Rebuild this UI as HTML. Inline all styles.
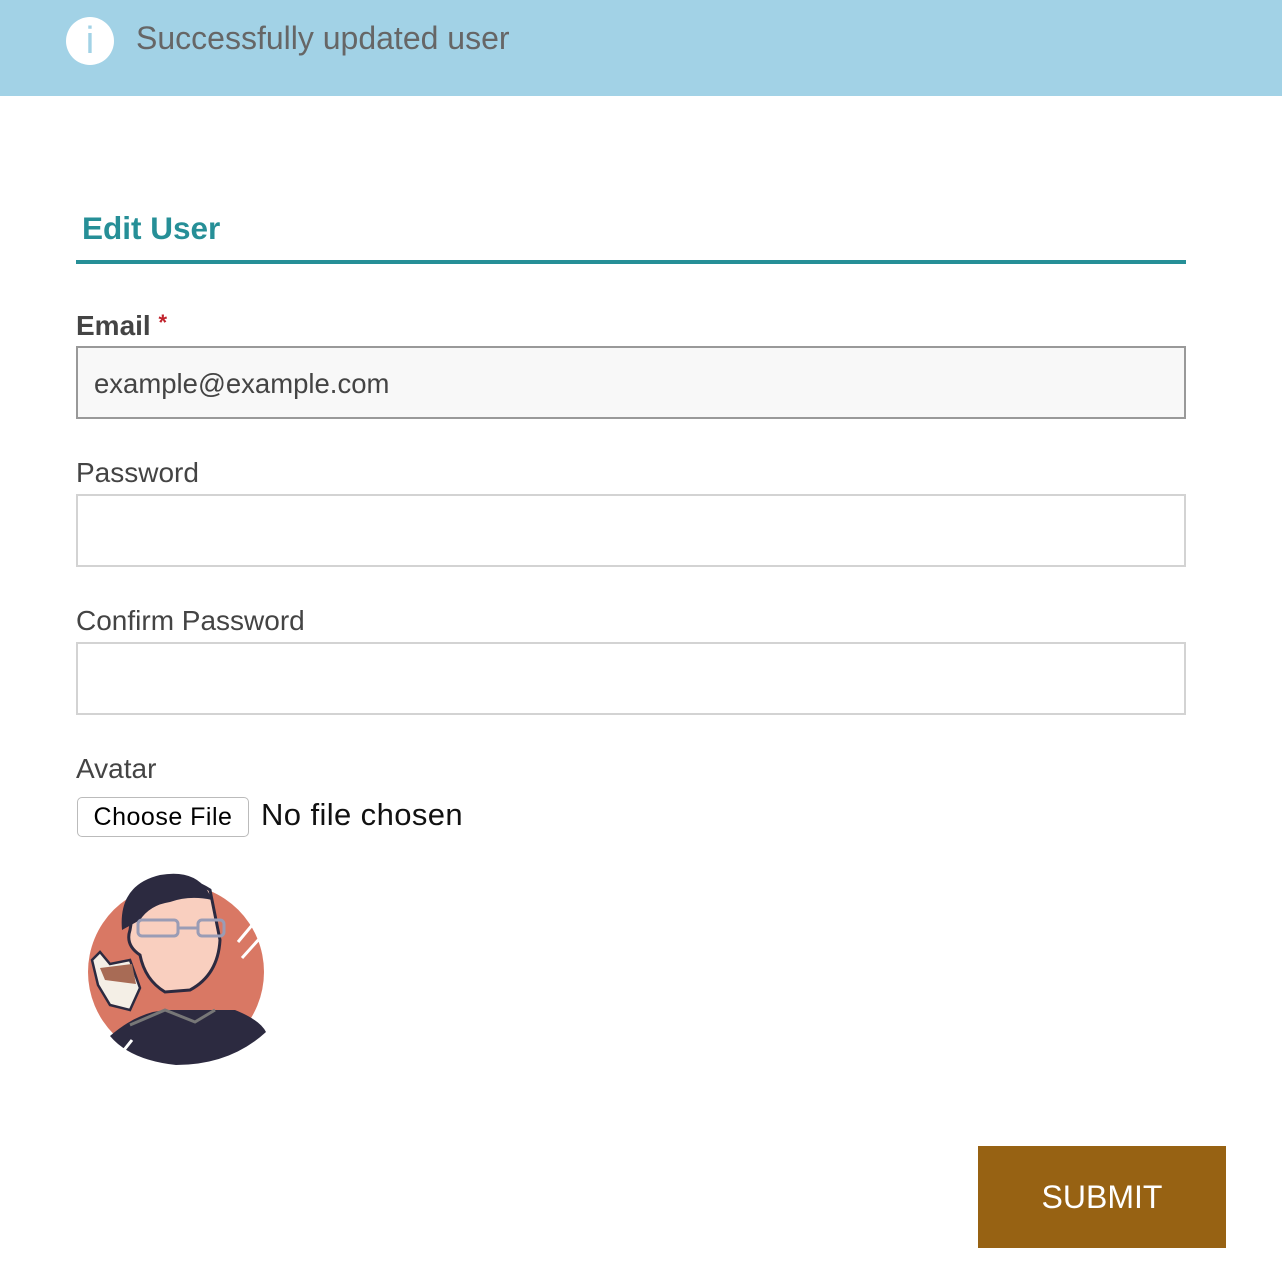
<!DOCTYPE html>
<html><head><meta charset="utf-8"><style>
*{box-sizing:border-box;margin:0;padding:0}
body{width:1282px;height:1282px;background:#fff;font-family:"Liberation Sans",Arial,sans-serif;position:relative;overflow:hidden}
.bar{position:absolute;left:0;top:0;width:1282px;height:96px;background:#a2d2e6}
.ic{position:absolute;left:66px;top:17px;width:48px;height:48px;border-radius:50%;background:#fff;color:#a2d2e6;font-size:38px;text-align:center;line-height:48px;font-weight:300}
.msg{position:absolute;left:136px;top:20px;font-size:32px;color:#666;letter-spacing:0px}
h2{position:absolute;left:82px;top:210px;font-size:31.5px;color:#268f97;font-weight:bold}
.rule{position:absolute;left:76px;top:260px;width:1110px;height:4px;background:#268f97}
.lbl{position:absolute;left:76px;font-size:28px;color:#444}
.in{position:absolute;left:76px;width:1110px;height:73px;border:2px solid #d3d3d3;background:#fff}
.btn{position:absolute;left:77px;top:797px;width:172px;height:40px;border:1px solid #bbb;border-radius:5px;background:#fff;font-size:25px;color:#000;text-align:center;line-height:38px;letter-spacing:0.5px}
.sub{position:absolute;left:978px;top:1146px;width:248px;height:102px;background:#976213;color:#fff;font-size:32px;text-align:center;line-height:102px}
</style></head><body>
<div class="bar"><div class="ic">i</div><div class="msg">Successfully updated user</div></div>
<h2>Edit User</h2>
<div class="rule"></div>
<div class="lbl" style="top:310px;font-weight:bold">Email <span style="color:#c0222c;font-size:22px;vertical-align:top">*</span></div>
<div class="in" style="top:346px;border-color:#999;background:#f8f8f8;font-size:27.5px;color:#444;padding:20px 16px">example@example.com</div>
<div class="lbl" style="top:457px">Password</div>
<div class="in" style="top:494px"></div>
<div class="lbl" style="top:605px">Confirm Password</div>
<div class="in" style="top:642px"></div>
<div class="lbl" style="top:753px">Avatar</div>
<div class="btn">Choose File</div>
<div style="position:absolute;left:261px;top:797px;font-size:31px;color:#111;letter-spacing:0.4px">No file chosen</div>
<svg style="position:absolute;left:70px;top:860px" width="210" height="210" viewBox="0 0 210 210">
<circle cx="106" cy="112" r="88" fill="#d97864"/>
<path d="M40 176 Q70 150 100 150 L165 150 Q190 160 196 172 Q160 205 106 205 Q60 200 40 176Z" fill="#2c2a40"/>
<path d="M22 100 L30 92 L40 104 L60 100 L70 128 L60 150 L40 145 L28 125Z" fill="#f4efe6" stroke="#2c2a40" stroke-width="2.5"/>
<path d="M30 108 L62 104 L66 124 L35 120Z" fill="#a86b55"/>
<path d="M65 40 Q100 5 140 30 L150 80 Q148 115 120 130 L95 132 Q75 120 70 95 Q55 85 60 70Z" fill="#f9cfbf" stroke="#2c2a40" stroke-width="3"/>
<path d="M52 70 Q48 25 90 15 Q130 8 142 40 Q120 35 100 42 Q80 45 70 60 Z" fill="#2c2a40"/>
<rect x="68" y="60" width="40" height="16" rx="4" fill="none" stroke="#9a9cb5" stroke-width="3"/>
<rect x="128" y="60" width="26" height="16" rx="4" fill="none" stroke="#9a9cb5" stroke-width="3"/>
<path d="M108 68 L128 68" stroke="#9a9cb5" stroke-width="3"/>
<path d="M168 82 L188 58 M172 98 L190 78" stroke="#fff" stroke-width="3"/>
<path d="M50 195 L62 180" stroke="#fff" stroke-width="3"/>
<path d="M60 165 L95 150 L125 162 L145 150" stroke="#777" stroke-width="3" fill="none"/>
</svg>
<div class="sub">SUBMIT</div>
</body></html>
